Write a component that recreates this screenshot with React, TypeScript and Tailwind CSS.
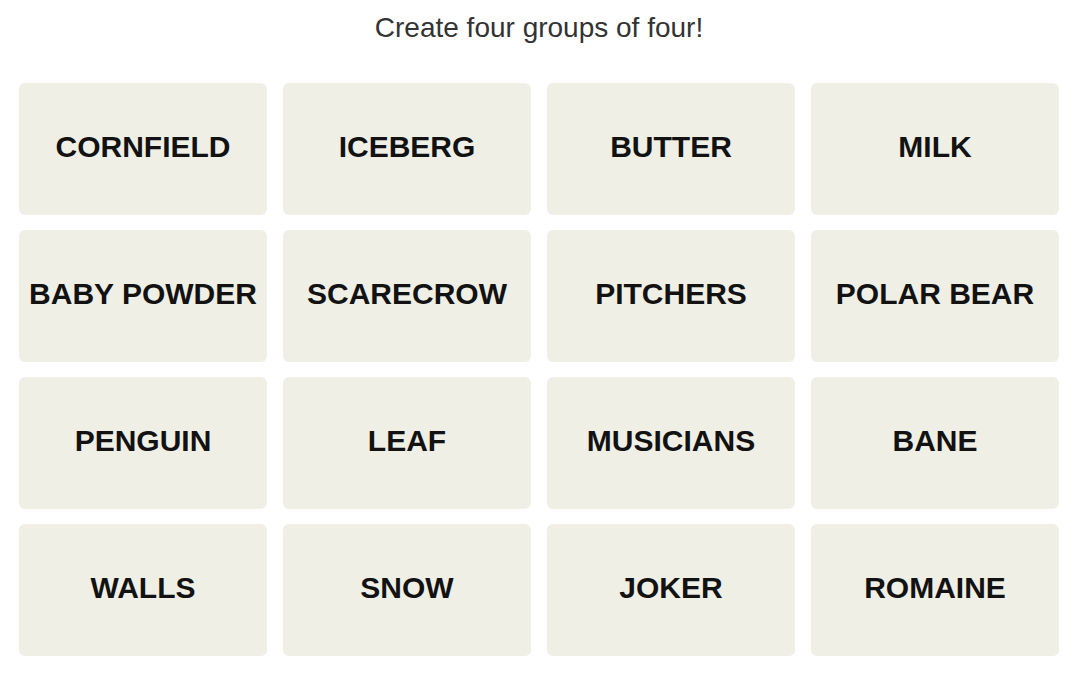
import React from 'react';

const words = [
  'CORNFIELD', 'ICEBERG', 'BUTTER', 'MILK',
  'BABY POWDER', 'SCARECROW', 'PITCHERS', 'POLAR BEAR',
  'PENGUIN', 'LEAF', 'MUSICIANS', 'BANE',
  'WALLS', 'SNOW', 'JOKER', 'ROMAINE',
];

export default function App() {
  return (
    <div
      className="w-[1078px] h-[675px] bg-white overflow-hidden"
      style={{ fontFamily: '"Liberation Sans", Arial, sans-serif' }}
    >
      <p className="pt-[14px] text-center text-[28px] leading-[28px] text-[#333333]">
        Create four groups of four!
      </p>
      <div className="mt-[41px] ml-[19px] grid w-[1040px] grid-cols-4 gap-x-[16px] gap-y-[15px]">
        {words.map((w) => (
          <div
            key={w}
            className="flex h-[132px] items-center justify-center rounded-md bg-[#efefe6] pb-[5px] text-[30px] font-bold text-[#121212]"
          >
            {w}
          </div>
        ))}
      </div>
    </div>
  );
}
